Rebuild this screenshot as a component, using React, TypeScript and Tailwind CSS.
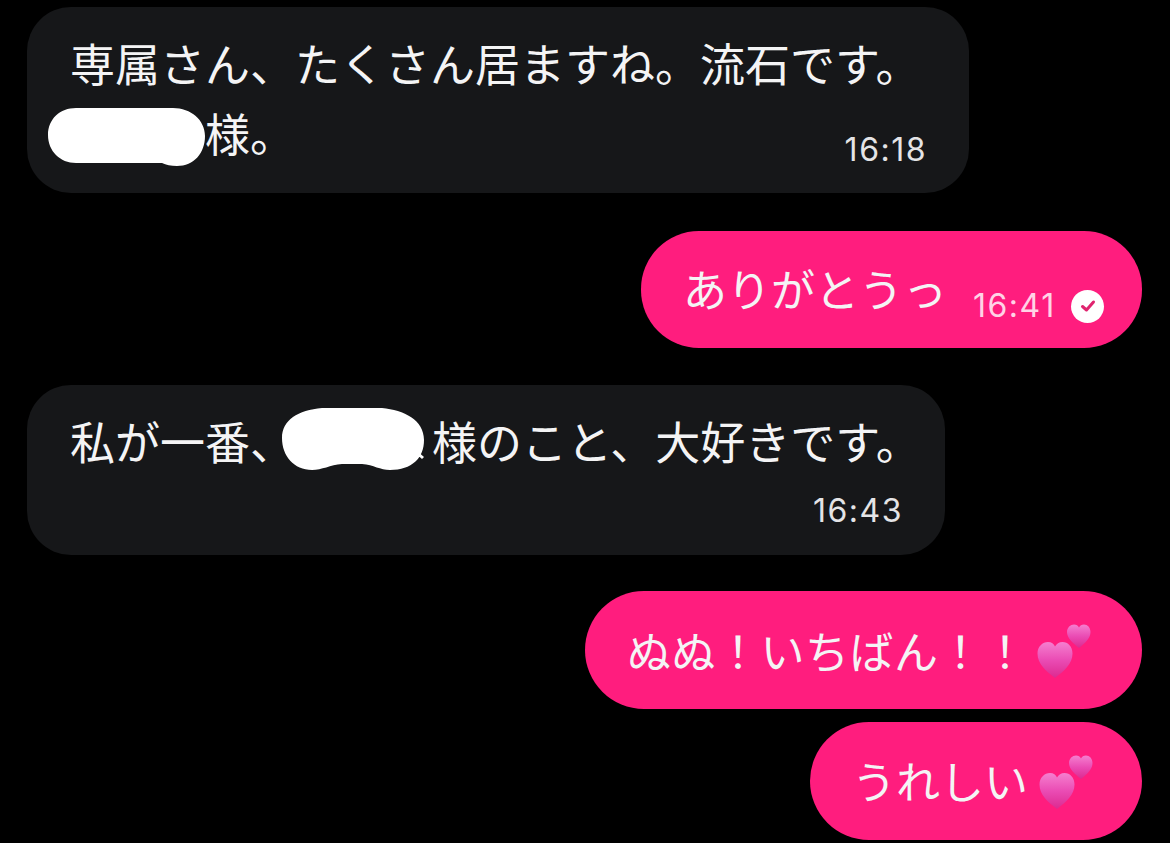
import { JSX } from "react"

const jp = "font-['Noto_Sans_CJK_JP','Noto_Sans_CJK_SC',sans-serif]"

/** Double heart emoji */
const Hearts = ({ id }: { id: string }): JSX.Element => (
  <svg width="58" height="58" viewBox="0 0 58 58" className="shrink-0">
    <defs>
      <linearGradient id={id} x1="0" y1="0" x2="0" y2="1">
        <stop offset="0" stopColor="#f57fcf" />
        <stop offset="0.5" stopColor="#ea4cb4" />
        <stop offset="1" stopColor="#dc2a90" />
      </linearGradient>
    </defs>
    <path
      d="M43 27 C37 22 31 17.500 31 11 C31 6.500 34.500 3.500 38 3.500 C40.500 3.500 42 4.800 43 6.500 C44 4.800 45.500 3.500 48 3.500 C51.500 3.500 54.500 6.500 54.500 11 C54.500 17.500 49 22 43 27 Z"
      fill={`url(#${id})`}
    />
    <path
      d="M19 57 C10 50 1.500 43 1.500 32.500 C1.500 25.500 6.500 21 12 21 C15.500 21 18 23 19 25.500 C20.500 23 23 21 26.500 21 C32 21 36.500 25.500 36.500 32.500 C36.500 43 28 50 19 57 Z"
      fill={`url(#${id})`}
    />
  </svg>
)

const Blob = ({ d, w, h, className }: { d: string; w: number; h: number; className: string }): JSX.Element => (
  <svg width={w} height={h} viewBox={`0 0 ${w} ${h}`} className={className}>
    <path d={d} fill="#ffffff" />
  </svg>
)

const timeClass = "text-[32px] leading-[38px] tracking-[1.500px] font-['Inter',sans-serif]"

export default function App() {
  return (
    <div className={`flex flex-col w-[1170px] h-[843px] overflow-hidden bg-black pt-[7px] text-[#f4f4f5] ${jp}`}>
      {/* recibido 1 */}
      <div className="flex flex-col self-start ml-[27px] w-[942px] h-[186px] rounded-[44px] bg-[#161719] pt-[21px] pl-[43px] pr-[42px] text-[45px] leading-[70px]">
        <div className="whitespace-nowrap">専属さん、たくさん居ますね。流石です。</div>
        <div className="flex items-center whitespace-nowrap -ml-[22px]">
          <Blob
            w={157}
            h={60}
            className="shrink-0 mt-[8px]"
            d="M28 1 L125 1 C143 1 157 13 157 29 C157 46 146 59 129 59 C123 59 118 58 114 56 L28 56 C12 56 0 44 0 28 C0 12 12 1 28 1 Z"
          />
          <span>様。</span>
        </div>
        <div className={`self-end -mt-[37px] text-[#e4e4e6] ${timeClass}`}>16:18</div>
      </div>

      {/* enviado 1 */}
      <div className="flex items-center self-end mt-[38px] mr-[28px] h-[117px] rounded-[58px] bg-[#ff1d7e] pl-[42px] pr-[38px]">
        <span className="w-[272px] text-[44px] leading-[58px] -mt-[4px] whitespace-nowrap">ありがとうっ</span>
        <span className={`w-[81px] ml-[18px] mt-[33px] text-[#ffd3e6] ${timeClass}`}>16:41</span>
        <span className="flex items-center justify-center mt-[33px] ml-[17px] w-[33px] h-[33px] rounded-full bg-white">
          <svg width="18" height="18" viewBox="0 0 18 18" fill="none">
            <path d="M3.500 9.500 L7.500 13 L14.500 5" stroke="#e0246f" strokeWidth="3" strokeLinecap="round" strokeLinejoin="round" />
          </svg>
        </span>
      </div>

      {/* recibido 2 */}
      <div className="flex flex-col self-start mt-[37px] ml-[27px] w-[918px] h-[170px] rounded-[44px] bg-[#161719] pt-[21px] pl-[43px] pr-[42px] text-[45px] leading-[70px]">
        <div className="flex items-center whitespace-nowrap">
          <span>私が一番、</span>
          <Blob
            w={142}
            h={62}
            className="shrink-0 -ml-[13px] -mt-[4px]"
            d="M40 0 L100 0 C122 2 142 12 142 32 C142 50 130 62 108 62 C98 62 92 57 80 56 L60 56 C48 57 40 62 30 62 C12 62 0 48 0 30 C0 12 16 2 40 0 Z M134 42 L142 49 L140 51 L132 44 Z"
          />
          <span className="ml-[8px]">様のこと、大好きです。</span>
        </div>
        <div className={`self-end mt-[16px] text-[#e4e4e6] ${timeClass}`}>16:43</div>
      </div>

      {/* enviado 2 */}
      <div className="flex items-center self-end mt-[36px] mr-[28px] h-[118px] rounded-[59px] bg-[#ff1d7e] pl-[42px] pr-[48px]">
        <span className="w-[396px] text-[44px] leading-[58px] whitespace-nowrap tracking-[0.500px]">ぬぬ！いちばん！！</span>
        <span className="ml-[13px]"><Hearts id="h1" /></span>
      </div>

      {/* enviado 3 */}
      <div className="flex items-center self-end mt-[13px] mr-[28px] h-[118px] rounded-[59px] bg-[#ff1d7e] pl-[42px] pr-[46px]">
        <span className="w-[176px] text-[44px] leading-[58px] -mt-[2px] whitespace-nowrap">うれしい</span>
        <span className="ml-[10px]"><Hearts id="h2" /></span>
      </div>
    </div>
  )
}
